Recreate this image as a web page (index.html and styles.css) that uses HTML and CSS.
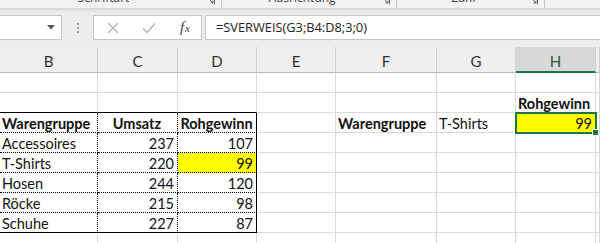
FILE: index.html
```html
<!DOCTYPE html>
<html lang="de">
<head>
    <meta charset="UTF-8" />
    <title>SVERWEIS Beispiel</title>
    <link rel="stylesheet" href="styles.css">
</head>
<body>

<!-- Ribbon (only the group labels are visible) -->
<div class="ribbon">
    <div class="group group-font">
        <span class="group-label">Schriftart</span>
        <svg class="launcher" width="8" height="8" viewBox="0 0 8 8"><path d="M0.5 0.5h7v7" fill="none" stroke="#666"/><path d="M2 2l4 4M6 3.5V6H3.5" fill="none" stroke="#666"/></svg>
    </div>
    <div class="group group-align">
        <span class="group-label">Ausrichtung</span>
        <svg class="launcher" width="8" height="8" viewBox="0 0 8 8"><path d="M0.5 0.5h7v7" fill="none" stroke="#666"/><path d="M2 2l4 4M6 3.5V6H3.5" fill="none" stroke="#666"/></svg>
    </div>
    <div class="group group-number">
        <span class="group-label">Zahl</span>
        <svg class="launcher" width="8" height="8" viewBox="0 0 8 8"><path d="M0.5 0.5h7v7" fill="none" stroke="#666"/><path d="M2 2l4 4M6 3.5V6H3.5" fill="none" stroke="#666"/></svg>
    </div>
</div>
<div class="ribbon-shadow"></div>

<!-- Formula bar -->
<div class="formula-bar">
    <div class="name-box">
        <svg class="name-arrow" width="8" height="5" viewBox="0 0 8 5"><path d="M0 0h8L4 4.5z" fill="#555"/></svg>
    </div>
    <div class="grip"><span></span><span></span><span></span></div>
    <div class="fx-buttons">
        <svg width="12" height="12" viewBox="0 0 12 12"><path d="M1 1l10 10M11 1L1 11" stroke="#b3b3b3" stroke-width="1.3"/></svg>
        <svg width="14" height="12" viewBox="0 0 14 12"><path d="M1 6.5l4 4L13 1.5" fill="none" stroke="#b3b3b3" stroke-width="1.5"/></svg>
        <span class="fx"><i>f</i><i class="fx-x">x</i></span>
    </div>
    <div class="formula-input">=SVERWEIS(G3;B4:D8;3;0)</div>
</div>

<!-- Worksheet -->
<table class="sheet">
    <colgroup>
        <col class="col-b"><col class="col-c"><col class="col-d"><col class="col-e">
        <col class="col-f"><col class="col-g"><col class="col-h"><col class="col-i">
    </colgroup>
    <thead>
    <tr>
        <th>B</th><th>C</th><th>D</th><th>E</th><th>F</th><th>G</th><th class="active">H</th><th></th>
    </tr>
    </thead>
    <tbody>
    <tr>
        <td></td><td></td><td></td><td></td><td></td><td></td><td></td><td></td>
    </tr>
    <tr>
        <td class="t-top"></td><td class="t-top"></td><td class="t-top"></td><td></td><td></td><td></td>
        <td class="bold">Rohgewinn</td><td></td>
    </tr>
    <tr>
        <td class="t-cell bold">Warengruppe</td>
        <td class="t-cell bold center">Umsatz</td>
        <td class="t-cell t-end bold center">Rohgewinn</td>
        <td></td>
        <td class="bold">Warengruppe</td>
        <td>T-Shirts</td>
        <td class="num yellow selected">99</td>
        <td></td>
    </tr>
    <tr>
        <td class="t-cell">Accessoires</td><td class="t-cell num">237</td><td class="t-cell t-end num">107</td>
        <td></td><td></td><td></td><td></td><td></td>
    </tr>
    <tr>
        <td class="t-cell">T-Shirts</td><td class="t-cell num">220</td><td class="t-cell t-end num yellow">99</td>
        <td></td><td></td><td></td><td></td><td></td>
    </tr>
    <tr>
        <td class="t-cell">Hosen</td><td class="t-cell num">244</td><td class="t-cell t-end num">120</td>
        <td></td><td></td><td></td><td></td><td></td>
    </tr>
    <tr>
        <td class="t-cell">Röcke</td><td class="t-cell num">215</td><td class="t-cell t-end num">98</td>
        <td></td><td></td><td></td><td></td><td></td>
    </tr>
    <tr>
        <td class="t-cell t-last">Schuhe</td><td class="t-cell t-last num">227</td><td class="t-cell t-end t-last num">87</td>
        <td></td><td></td><td></td><td></td><td></td>
    </tr>
    <tr>
        <td></td><td></td><td></td><td></td><td></td><td></td><td></td><td></td>
    </tr>
    </tbody>
</table>

</body>
</html>
```

FILE: styles.css
```css
body {
    margin: 0;
    width: 600px;
    height: 243px;
    overflow: hidden;
    background: #ffffff;
    font-family: Lato, "Liberation Sans", sans-serif;
}

/* ribbon */
.ribbon {
    display: flex;
    height: 8px;
    overflow: hidden;
    background: #f3f3f3;
}
.group {
    display: flex;
    align-items: flex-start;
    border-right: 1px solid #c8c8c8;
    height: 8px;
}
.group-font { width: 221px; }
.group-align { width: 174px; }
.group-number { width: 147px; }
.group-label {
    flex: 1;
    text-align: center;
    font-family: "Open Sans", sans-serif;
    font-size: 12px;
    line-height: 14px;
    margin-top: -9px;
    color: #444;
}
.launcher {
    margin: -3px 6px 0 0;
}
.ribbon-shadow {
    height: 4px;
    background: linear-gradient(#d6d6d6, #ececec);
}

/* formula bar */
.formula-bar {
    display: flex;
    align-items: center;
    height: 35px;
    background: #ececec;
}
.name-box {
    width: 62px;
    height: 25px;
    box-sizing: border-box;
    margin-top: -4px;
    background: #fff;
    border: 1px solid #c6c6c6;
    border-left: none;
    display: flex;
    align-items: center;
    justify-content: flex-end;
    padding-right: 6px;
}
.grip {
    width: 31px;
    margin-top: -4px;
    display: flex;
    flex-direction: column;
    align-items: center;
    gap: 2px;
}
.grip span {
    width: 2px;
    height: 2px;
    background: #a0a0a0;
}
.fx-buttons {
    width: 109px;
    height: 25px;
    box-sizing: border-box;
    margin-top: -4px;
    background: #fff;
    border: 1px solid #c6c6c6;
    display: flex;
    align-items: center;
    justify-content: space-between;
    padding: 0 11px 0 13px;
}
.fx {
    font-family: "Liberation Serif", serif;
    font-size: 15px;
    color: #444;
}
.fx-x {
    font-size: 11px;
    margin-left: 1px;
}
.formula-input {
    flex: 1;
    height: 25px;
    box-sizing: border-box;
    margin: -4px 0 0 3px;
    background: #fff;
    border: 1px solid #c6c6c6;
    border-right: none;
    padding-left: 10px;
    font-family: "Open Sans", sans-serif;
    font-size: 12.8px;
    line-height: 23px;
    color: #222;
}

/* worksheet */
.sheet {
    table-layout: fixed;
    width: 600px;
    border-collapse: separate;
    border-spacing: 0;
    font-size: 14.5px;
    color: #111;
}
.col-b { width: 98px; }
.col-c { width: 80px; }
.col-d { width: 79px; }
.col-e { width: 79px; }
.col-f { width: 101px; }
.col-g { width: 79px; }
.col-h { width: 80px; }
.col-i { width: 4px; }

.sheet th {
    height: 26px;
    box-sizing: border-box;
    padding: 3px 0 0;
    background: #efefef;
    border-right: 1px solid #cfcfcf;
    border-bottom: 1px solid #b9b9b9;
    font-weight: normal;
    font-size: 15px;
    color: #333;
}
.sheet th.active {
    background: #d8d8d8;
    border-bottom: 2px solid #217346;
    color: #1d5c38;
}
.sheet td {
    height: 20px;
    box-sizing: border-box;
    padding: 0 3px 0 2px;
    border-right: 1px solid #dadada;
    border-bottom: 1px solid #dadada;
    line-height: 17px;
    vertical-align: bottom;
    white-space: nowrap;
    overflow: visible;
}
.sheet td.t-top { border-bottom: 1px solid #000; }
.sheet td.t-cell {
    border-right: 1px dotted #000;
    border-bottom: 1px dotted #000;
}
.sheet td.t-end { border-right: 1px solid #000; }
.sheet td.t-last { border-bottom: 1px solid #000; }

.bold { font-weight: bold; }
.center { text-align: center; }
.num { text-align: right; }
.yellow { background: #ffff00; }

.selected {
    position: relative;
    outline: 2px solid #217346;
    outline-offset: -1px;
}
.selected::after {
    content: "";
    position: absolute;
    right: -4px;
    bottom: -4px;
    width: 5px;
    height: 5px;
    background: #217346;
    border: 1px solid #fff;
}
```
